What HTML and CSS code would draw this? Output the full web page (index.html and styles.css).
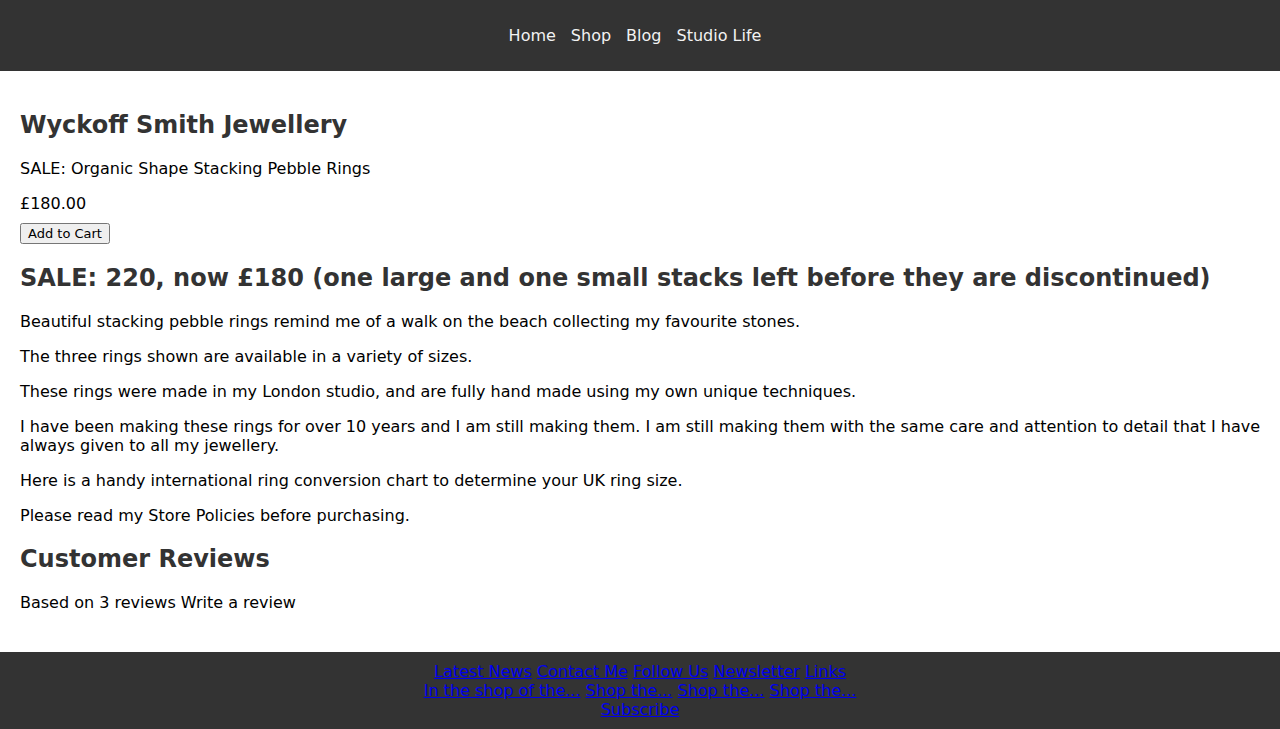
FILE: index.html
```html
<!DOCTYPE html>
<html lang="en">
<head>
<meta charset="utf-8">
<title>Wyckoff Smith Jewellery</title>
<link rel="stylesheet" href="styles.css">
</head>
<body>
<header class="site-header">
  <nav class="main-nav">
    <a href="#">Home</a>
    <a href="#">Shop</a>
    <a href="#">Blog</a>
    <a href="#">Studio Life</a>
  </nav>
</header>
<main class="content">
  <h1 class="brand">Wyckoff Smith Jewellery</h1>
  <p>SALE: Organic Shape Stacking Pebble Rings</p>
  <p class="price">£180.00</p>
  <form class="cart-form"><button type="button" class="cart-btn">Add to Cart</button></form>
  <h2 class="section-title">SALE: 220, now £180 (one large and one small stacks left before they are discontinued)</h2>
  <p>Beautiful stacking pebble rings remind me of a walk on the beach collecting my favourite stones.</p>
  <p>The three rings shown are available in a variety of sizes.</p>
  <p>These rings were made in my London studio, and are fully hand made using my own unique techniques.</p>
  <p>I have been making these rings for over 10 years and I am still making them. I am still making them with the same care and attention to detail that I have always given to all my jewellery.</p>
  <p>Here is a handy international ring conversion chart to determine your UK ring size.</p>
  <p>Please read my Store Policies before purchasing.</p>
  <h2 class="section-title">Customer Reviews</h2>
  <p>Based on 3 reviews Write a review</p>
</main>
<footer class="site-footer">
  <div class="footer-row">
    <a href="#">Latest News</a> <a href="#">Contact Me</a> <a href="#">Follow Us</a> <a href="#">Newsletter</a> <a href="#">Links</a>
  </div>
  <div class="footer-row">
    <a href="#">In the shop of the...</a> <a href="#">Shop the...</a> <a href="#">Shop the...</a> <a href="#">Shop the...</a>
  </div>
  <div class="footer-row">
    <a href="#">Subscribe</a>
  </div>
</footer>
</body>
</html>
```
FILE: styles.css
```css
html, body {
  margin: 0;
  padding: 0;
}
body {
  font-family: "DejaVu Sans", sans-serif;
  font-size: 16px;
  color: #000;
  background: #fff;
}
.site-header {
  background: #333;
  height: 71px;
  display: flex;
  align-items: center;
  justify-content: center;
}
.main-nav {
  display: flex;
  gap: 15px;
  padding-right: 10px;
}
.main-nav a {
  color: #f2f2f2;
  text-decoration: none;
}
.content {
  padding: 20px 20px 24px;
}
.content p {
  margin: 16px 0;
}
.brand {
  font-size: 24px;
  color: #333;
  margin: 20px 0;
}
.price {
  margin-bottom: 10px !important;
}
.cart-form {
  margin: 0;
}
.cart-btn {
  font-family: "DejaVu Sans", sans-serif;
  font-size: 13px;
  padding: 1px 6px;
}
.section-title {
  font-size: 24px;
  color: #333;
  margin: 20px 0;
}
.site-footer {
  background: #333;
  text-align: center;
  padding: 10px 0;
}
.footer-row {
  line-height: 19px;
}
.footer-row a {
  color: #0000ee;
}
```
